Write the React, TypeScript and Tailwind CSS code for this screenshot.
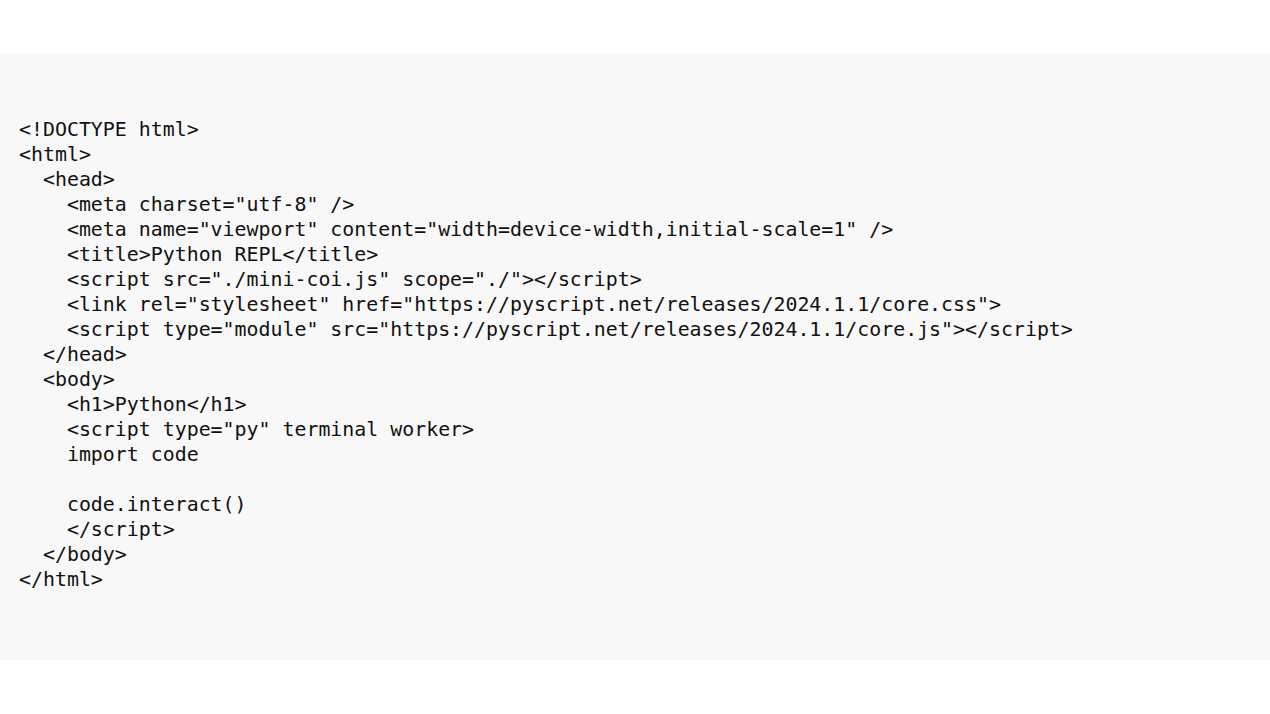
const code = `<!DOCTYPE html>
<html>
  <head>
    <meta charset="utf-8" />
    <meta name="viewport" content="width=device-width,initial-scale=1" />
    <title>Python REPL</title>
    <script src="./mini-coi.js" scope="./"></script>
    <link rel="stylesheet" href="https://pyscript.net/releases/2024.1.1/core.css">
    <script type="module" src="https://pyscript.net/releases/2024.1.1/core.js"></script>
  </head>
  <body>
    <h1>Python</h1>
    <script type="py" terminal worker>
    import code

    code.interact()
    </script>
  </body>
</html>`

export default function App() {
  return (
    <main className="min-h-[714px] bg-white pt-[54px]">
      <div className="h-[606px] bg-[#f8f8f8] pl-[19px] pt-[63px]">
        <pre className="font-['DejaVu_Sans_Mono',monospace] text-[19.9px] leading-[25px] text-[#111]">
          {code}
        </pre>
      </div>
    </main>
  )
}
